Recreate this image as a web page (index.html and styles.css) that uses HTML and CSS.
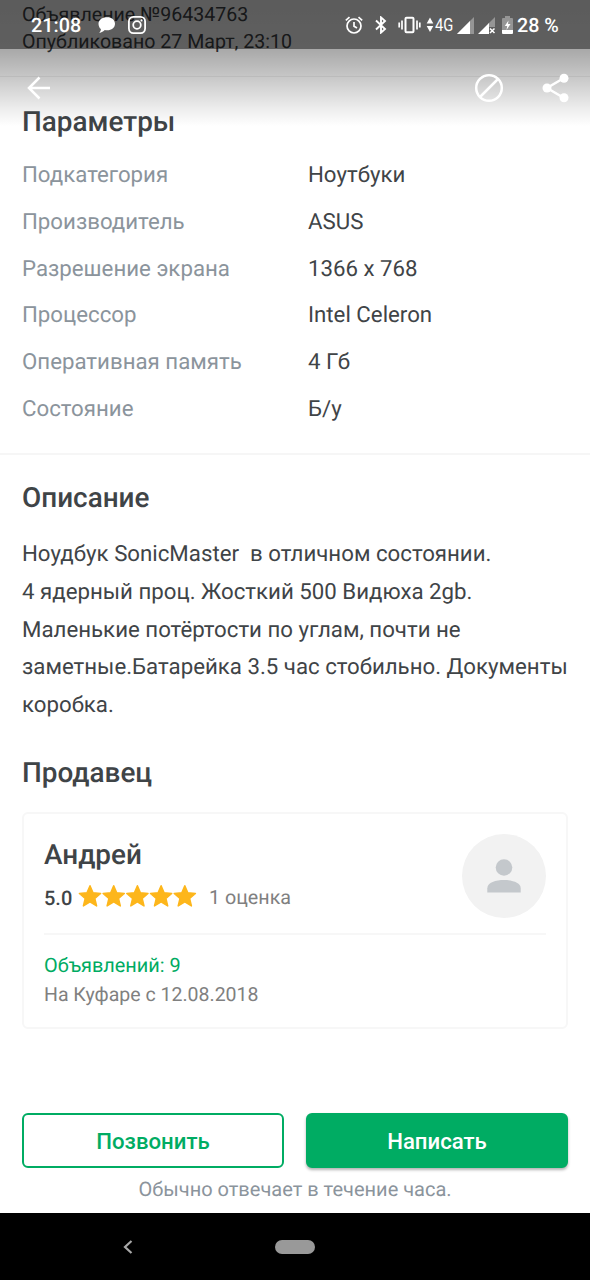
FILE: index.html
```html
<!DOCTYPE html>
<html lang="ru">
<head>
<meta charset="utf-8">
<title>Объявление</title>
<link rel="stylesheet" href="styles.css">
</head>
<body>
<div class="screen">
  <header class="overlay">
    <div class="status">
      <span class="clock">21:08</span>
      <svg class="chat" width="18" height="18" viewBox="0 0 18 18"><path fill="#fff" d="M9 1.200c4.700 0 8 2.700 8 6.500s-3.300 6.600-8 6.600c-.8 0-1.500-.1-2.200-.2C5.500 15.500 3.500 16.600 1.300 16.900c.9-1 1.500-2.200 1.600-3.800C1.400 12 .5 9.800.5 7.700.5 3.900 4.300 1.200 9 1.200z"/></svg>
      <svg class="insta" width="18" height="18" viewBox="0 0 18 18" fill="none" stroke="#fff" stroke-width="1.800"><rect x=".9" y=".9" width="16.200" height="16.200" rx="4.500"/><circle cx="9" cy="9" r="3.800"/><circle cx="13.600" cy="4.400" r="1.100" fill="#fff" stroke="none"/></svg>
      <div class="system">
        <svg class="alarm" width="18" height="18" viewBox="0 0 18 18" fill="none" stroke="#fff" stroke-width="1.700"><circle cx="9" cy="10" r="7"/><path d="M9 6v4.300l3 1.800M.8 4.300L4.500 1.200M17.200 4.300L13.500 1.200"/></svg>
        <svg class="bt" width="12" height="18" viewBox="0 0 12 18" fill="none" stroke="#fff" stroke-width="1.900"><path d="M1 4.500l9 8.500-4 3.600V1.400L10 5 1 13.500"/></svg>
        <svg class="vibe" width="23" height="18" viewBox="0 0 23 18" fill="none" stroke="#fff"><rect x="7.500" y="1.800" width="8" height="14.400" rx="1" stroke-width="2"/><path stroke-width="1.700" d="M4 4.500v9M1.200 6.500v5M19 4.500v9M21.800 6.500v5"/></svg>
        <svg class="data" width="8" height="16" viewBox="0 0 8 16" fill="#fff"><path d="M4 .5l3.300 6H.7zM4 15l3.300-6H.7z"/></svg>
        <span class="net">4G</span>
        <svg class="sig" width="17" height="17" viewBox="0 0 17 17"><path fill="#959595" d="M17 0v17H0z"/><path fill="#fff" d="M13 4v13H0z"/></svg>
        <svg class="sig2" width="18" height="17" viewBox="0 0 18 17"><path fill="#959595" d="M17 0v10h-7V7z"/><path fill="#fff" d="M11 6v11H0z"/><path fill="none" stroke="#fff" stroke-width="1.500" d="M12 11.500l4.500 4.500M16.500 11.500L12 16"/></svg>
        <svg class="batt" width="11" height="18" viewBox="0 0 11 18"><path fill="#959595" d="M3 0h5v2h2q1 0 1 1v11H0V3q0-1 1-1h2z"/><path fill="#fff" d="M0 14h11v3q0 1-1 1H1q-1 0-1-1zM6.500 4.500L2.800 10h2.400l-.7 4L8.500 8H6z"/></svg>
        <span class="percent">28 %</span>
      </div>
    </div>
    <nav class="toolbar">
      <svg class="back" width="24" height="24" viewBox="0 0 24 24" fill="none" stroke="#fff" stroke-width="2.500"><path d="M23 12H2M12.500 1.500L2 12l10.500 10.500"/></svg>
      <svg class="block" width="30" height="30" viewBox="0 0 30 30" fill="none" stroke="#fff" stroke-width="2.500"><circle cx="15" cy="15" r="12.800"/><path d="M6 24L24 6"/></svg>
      <svg class="share" width="28" height="30" viewBox="0 0 28 30" fill="#fff"><path d="M22 5L5 15l17 10" fill="none" stroke="#fff" stroke-width="2.500"/><circle cx="22" cy="5.200" r="4.500"/><circle cx="5" cy="15" r="4.500"/><circle cx="22" cy="24.800" r="4.500"/></svg>
    </nav>
  </header>

  <main>
    <section class="meta">
      <p>Объявление №96434763</p>
      <p>Опубликовано 27 Март, 23:10</p>
    </section>
    <section class="params">
      <h2>Параметры</h2>
      <dl>
        <dt>Подкатегория</dt><dd>Ноутбуки</dd>
        <dt>Производитель</dt><dd>ASUS</dd>
        <dt>Разрешение экрана</dt><dd>1366 x 768</dd>
        <dt>Процессор</dt><dd>Intel Celeron</dd>
        <dt>Оперативная память</dt><dd>4 Гб</dd>
        <dt>Состояние</dt><dd>Б/у</dd>
      </dl>
    </section>
    <section class="about">
      <h2>Описание</h2>
      <p class="text">Ноудбук SonicMaster  в отличном состоянии.
4 ядерный проц. Жосткий 500 Видюха 2gb.
Маленькие потёртости по углам, почти не
заметные.Батарейка 3.5 час стобильно. Документы
коробка.</p>
      <h2 class="seller-title">Продавец</h2>
      <article class="card">
        <div class="card-top">
          <div>
            <h3>Андрей</h3>
            <div class="rating">
              <b>5.0</b>
              <svg class="stars" width="119" height="24" viewBox="0 0 119 24" fill="#fdb61b" stroke="#fdb61b" stroke-width="1.500" stroke-linejoin="round">
                <defs><path id="star" d="M12 1.800l3 7 7.600.7-5.800 5 1.800 7.400-6.600-4-6.600 4 1.800-7.400-5.800-5 7.600-.7z"/></defs>
                <use href="#star"/><use href="#star" x="23.700"/><use href="#star" x="47.400"/><use href="#star" x="71.100"/><use href="#star" x="94.800"/>
              </svg>
              <span class="votes">1 оценка</span>
            </div>
          </div>
          <div class="avatar"><svg width="34" height="34" viewBox="0 0 34 34" fill="#c4c8cc"><circle cx="17" cy="8.500" r="8.300"/><path d="M.3 33.500v-4.300C.3 23.500 9 21 17 21s16.700 2.500 16.700 8.200v4.300z"/></svg></div>
        </div>
        <p class="ads">Объявлений: 9</p>
        <p class="since">На Куфаре с 12.08.2018</p>
      </article>
    </section>
  </main>

  <footer class="actions">
    <div class="buttons">
      <button class="btn call">Позвонить</button>
      <button class="btn write">Написать</button>
    </div>
    <p class="hint">Обычно отвечает в течение часа.</p>
  </footer>
  <div class="navbar">
    <svg class="nav-back" width="10" height="14" viewBox="0 0 10 14" fill="none" stroke="#a8a8a8" stroke-width="2.200"><path d="M8.500 1L2 7l6.500 6"/></svg>
    <span class="pill"></span>
  </div>
</div>
</body>
</html>
```
FILE: styles.css
```css
* { box-sizing: border-box; }
body, p, h2, h3, dl, dd { margin: 0; }
body { font-family: Roboto, "Noto Sans", sans-serif; color: #3f4447; background: #fff; text-rendering: geometricPrecision; }
svg { display: block; flex: none; }
.screen { position: relative; display: flex; flex-direction: column; width: 590px; height: 1280px; overflow: hidden; }

.overlay { position: absolute; top: 0; left: 0; width: 590px; height: 128px; background: linear-gradient(rgba(0,0,0,.36) 0, rgba(0,0,0,.34) 49px, rgba(0,0,0,.22) 77px, rgba(0,0,0,.08) 107px, transparent 126px); }
.status { display: flex; align-items: center; height: 49px; padding: 1px 0 0 31px; color: #fff; background: rgba(0,0,0,.435); }
.clock { width: 67px; font-size: 19.800px; font-weight: 500; }
.insta { margin-left: 12px; }
.system { display: flex; align-items: center; margin-left: 199px; }
.bt { margin-left: 12px; }
.vibe { margin-left: 11px; }
.data { margin-left: 5px; }
.net { width: 22px; margin-left: 1px; font-size: 18px; transform: scaleX(.82); transform-origin: left; }
.sig2 { margin-left: 4px; }
.batt { margin-left: 6px; }
.percent { margin-left: 4px; font-size: 19.700px; font-weight: 500; white-space: nowrap; }
.toolbar { display: flex; align-items: center; height: 77px; padding: 0 20px 0 27px; }
.block { margin-left: auto; }
.share { margin-left: 38px; }

.meta { height: 77px; padding: 1px 22px 0; border-bottom: 1px solid #f0f0f0; font-size: 19.600px; line-height: 27px; }
h2, h3 { font-size: 27.900px; line-height: 32px; font-weight: 500; }
.params { height: 378px; padding: 29px 22px 0; border-bottom: 2px solid #f6f6f6; }
dl { display: grid; grid-template-columns: 286px 1fr; grid-auto-rows: 46.800px; margin-top: 13.700px; align-items: center; font-size: 22.250px; }
dt { color: #8b949c; }
.about { padding: 27px 22px 0; }
.text { margin-top: 22px; font-size: 22.250px; line-height: 37.800px; white-space: pre; }
.seller-title { margin-top: 32px; }
.card { height: 217px; margin-top: 23px; padding: 20px 20px 0; border: 2px solid #f7f7f7; border-radius: 6px; }
.card-top { display: flex; justify-content: space-between; height: 101px; border-bottom: 2px solid #f7f7f7; }
h3 { margin-top: 5px; }
.rating { display: flex; align-items: center; height: 24px; margin-top: 13px; }
.rating b { width: 34px; padding-top: 4px; font-size: 20px; font-weight: 500; }
.votes { margin-left: 12px; padding-top: 4px; font-size: 19.700px; color: #808080; }
.avatar { display: flex; align-items: center; justify-content: center; width: 84px; height: 84px; border-radius: 50%; background: #f2f2f2; }
.ads { margin-top: 16px; font-size: 19.900px; line-height: 29px; color: #00ab62; }
.since { font-size: 19.500px; line-height: 29px; color: #808080; }

.actions { height: 101px; margin-top: auto; padding: 1px 22px 0; }
.buttons { display: grid; grid-template-columns: 1fr 1fr; gap: 22px; }
.btn { height: 55px; padding: 1px 0 0; border: 2px solid #00ac63; border-radius: 6px; font: 500 22.200px Roboto, "Noto Sans", sans-serif; }
.call { color: #00ac63; background: #fff; }
.write { color: #fff; background: #00ac63; box-shadow: 0 2px 3px rgba(0,0,0,.3); }
.hint { margin-top: 9px; font-size: 20px; line-height: 25px; color: #8b949c; text-align: center; }
.navbar { display: flex; align-items: center; height: 67px; padding-left: 123px; background: #000; }
.pill { width: 40px; height: 14px; margin-left: 142px; border-radius: 7px; background: #999; }
```
